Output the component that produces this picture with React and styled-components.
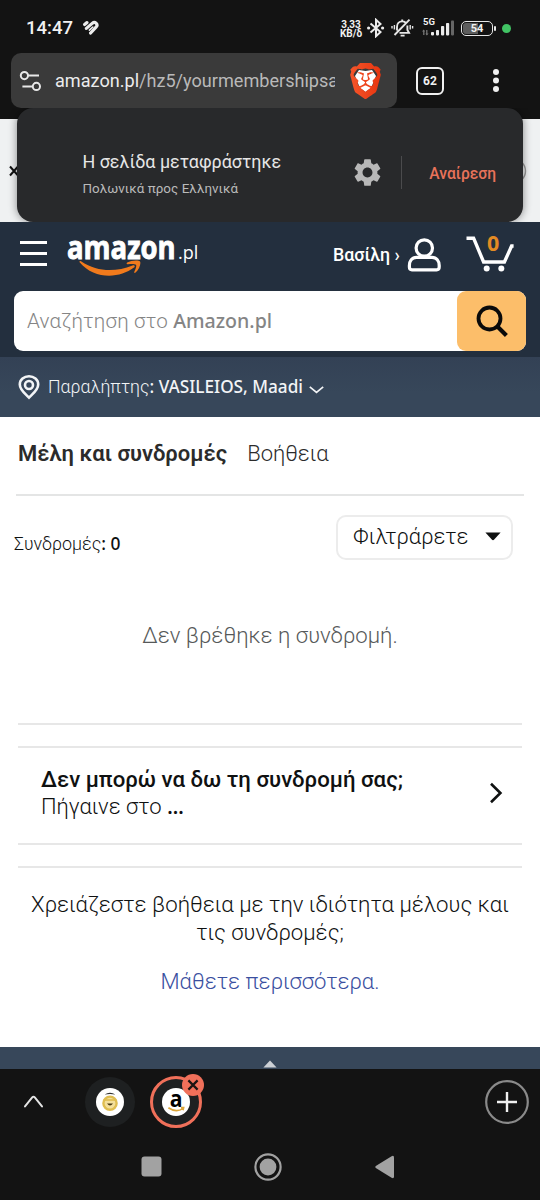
import styled, { createGlobalStyle } from "styled-components";
import { SiBrave } from "react-icons/si";
import { MdSettings } from "react-icons/md";

const Global = createGlobalStyle`
  * { box-sizing: border-box; }
  body { margin: 0; background: #fff; }
  svg { display: block; flex: none; }
  button { border: 0; padding: 0; background: none; font: inherit; color: inherit; }
`

const ember = `"Noto Sans", sans-serif`

const Screen = styled.div`
  width: 540px;
  height: 1200px;
  display: flex;
  flex-direction: column;
  overflow: hidden;
  background: #fff;
  color: #0f1111;
  font-family: Roboto, "Noto Sans", sans-serif;
  white-space: nowrap;
`

/* ---------- system status bar ---------- */
const StatusBar = styled.div`
  height: 53px;
  padding: 3px 29px 0 26px;
  display: flex;
  align-items: center;
  background: #131313;
  color: #f1f1f1;
`
const Clock = styled.span`
  width: 56px;
  font-size: 18.5px;
  font-weight: 500;
`
const StatusIcons = styled.div`
  margin-left: auto;
  display: flex;
  align-items: center;
`
const Speed = styled.div`
  width: 22px;
  margin: 2px 4px 0 0;
  font-size: 10px;
  font-weight: 700;
  line-height: 9.5px;
  text-align: center;
`
const Bluetooth = styled.div`
  margin-right: 4px;
`
const Signal = styled.div`
  position: relative;
  margin-left: 8px;
  span {
    position: absolute;
    left: 1px;
    top: -4px;
    font-size: 9.5px;
    font-weight: 700;
    line-height: 11px;
  }
`
const Battery = styled.div`
  width: 32px;
  height: 15px;
  margin-left: 7px;
  border: 1.6px solid #e6e6e6;
  border-radius: 5px;
  background: linear-gradient(90deg, #5c5c5c 54%, #131313 54%);
  background-clip: content-box;
  padding: 1px;
  font-size: 11px;
  font-weight: 700;
  line-height: 11.5px;
  text-align: center;
`
const BatteryTip = styled.i`
  width: 2px;
  height: 5px;
  margin-left: 1px;
  border-radius: 1px;
  background: #e6e6e6;
`
const Dot = styled.i`
  width: 9px;
  height: 9px;
  margin-left: 6px;
  border-radius: 50%;
  background: #41c464;
`

/* ---------- browser toolbar ---------- */
const Toolbar = styled.div`
  height: 66px;
  padding-left: 11px;
  display: flex;
  align-items: flex-start;
  background: #131313;
`
const UrlBox = styled.div`
  width: 386px;
  height: 55px;
  padding: 0 16px 0 8px;
  display: flex;
  align-items: center;
  border-radius: 10px;
  background: #3a3a3a;
`
const Url = styled.div`
  width: 280px;
  margin: 0 15px 0 13px;
  overflow: hidden;
  font-size: 18.1px;
  color: #b9b9b9;
  b { font-weight: 400; color: #ececec; }
`
const Tabs = styled.button`
  width: 28px;
  height: 28px;
  margin: 14px 0 0 19px;
  border: 2px solid #f0f0f0;
  border-radius: 6px;
  color: #f0f0f0;
  font-size: 12px;
  font-weight: 700;
  line-height: 24px;
`
const MenuButton = styled.button`
  margin: 15px 0 0 48px;
`

/* ---------- translate message over the page ---------- */
const Behind = styled.div`
  position: relative;
  height: 103px;
  padding: 0 8px;
  display: flex;
  align-items: center;
  background: #eff1f2;
`
const Message = styled.div`
  position: absolute;
  left: 17px;
  right: 17px;
  top: -11px;
  height: 114px;
  padding: 15px 27px 0 65px;
  display: flex;
  align-items: center;
  border-radius: 16px;
  background: #28292b;
  box-shadow: 0 0 8px rgba(0, 0, 0, 0.45);
  clip-path: inset(0 -12px 0 -12px);
`
const MessageText = styled.div`
  width: 273px;
  padding: 5px 0 0 0.5px;
  color: #e6e6e6;
  font-size: 17.9px;
  line-height: 24px;
  small {
    display: block;
    margin-top: 3px;
    font-size: 13.4px;
    color: #bababa;
    letter-spacing: 0.05px;
  }
`
const MessageRule = styled.i`
  width: 1px;
  height: 33px;
  margin: 0 27px 0 17px;
  background: #4b4b4d;
`
const Undo = styled.button`
  padding-top: 2px;
  color: #e8735a;
  font-size: 15.6px;
  font-weight: 500;
`

/* ---------- amazon header ---------- */
const Header = styled.header`
  height: 135px;
  background: #232f3e;
`
const HeaderTop = styled.div`
  height: 69px;
  padding-left: 20px;
  display: flex;
  align-items: flex-start;
`
const Burger = styled.div`
  width: 27px;
  height: 25px;
  margin: 19px 20px 0 0;
  display: flex;
  flex-direction: column;
  justify-content: space-between;
  i { height: 3px; background: #fff; }
`
const Logo = styled.div`
  position: relative;
  width: 132px;
  height: 60px;
  display: flex;
  color: #fff;
  svg { position: absolute; left: 12px; top: 38px; }
`
const LogoWord = styled.span`
  width: 111px;
  margin-top: 4px;
  font: 700 32.5px/42px "Open Sans", sans-serif;
  -webkit-text-stroke: 0.9px #fff;
  transform: scaleX(0.845);
  transform-origin: left;
`
const LogoTld = styled.span`
  margin-top: 17px;
  font: 400 18px/26px "Open Sans", sans-serif;
`
const Account = styled.div`
  width: 74px;
  margin: 22px 0 0 134px;
  color: #fff;
  font-size: 17.8px;
  font-weight: 500;
  line-height: 22px;
`
const Cart = styled.div`
  position: relative;
  margin: 12px 0 0 24px;
  span {
    position: absolute;
    left: 21px;
    top: -5px;
    color: #e38b24;
    font: 700 21.5px/28px "Open Sans", sans-serif;
  }
`
const Person = styled.div`
  margin-top: 15px;
`
const Search = styled.div`
  height: 60px;
  margin: 0 14px;
  display: flex;
  border-radius: 9px;
  background: #fff;
`
const SearchInput = styled.div`
  flex: 1;
  padding-left: 13px;
  color: #858585;
  font-size: 20.6px;
  font-weight: 300;
  line-height: 60px;
  letter-spacing: 0.18px;
  white-space: pre;
  b { font: 500 19.6px ${ember}; letter-spacing: 0; }
`
const SearchButton = styled.button`
  width: 69px;
  display: grid;
  place-items: center;
  border-radius: 9px;
  background: #fcbe6a;
`
const Delivery = styled.div`
  height: 60px;
  padding: 0 0 1px 18px;
  display: flex;
  align-items: center;
  background: linear-gradient(#334155, #37475a 60%);
  color: #f2f4f6;
  font-size: 17.8px;
  font-weight: 300;
  b { font: 500 17.2px ${ember}; }
`
const DeliveryText = styled.span`
  margin: 0 6px 0 8px;
`
const DeliveryArrow = styled.span`
  padding-top: 5px;
`

/* ---------- page ---------- */
const Page = styled.main`
  height: 630px;
  display: flex;
  flex-direction: column;
  font-size: 22px;
  font-weight: 300;
`
const PageTabs = styled.nav`
  height: 79px;
  margin: 0 16px;
  padding: 0 0 5px 2px;
  display: flex;
  align-items: center;
  gap: 20px;
  border-bottom: 2px solid #e4e5e5;
  color: #2b2b2b;
  b { font-weight: 600; }
`
const FilterRow = styled.div`
  height: 45px;
  margin: 19px 27px 0 14px;
  display: flex;
  align-items: center;
  justify-content: space-between;
`
const Count = styled.div`
  padding-top: 10px;
  font-size: 17.9px;
  span { font: 500 17.4px ${ember}; }
`
const Filter = styled.button`
  width: 177px;
  height: 45px;
  padding: 0 10px 2px 15px;
  display: flex;
  align-items: center;
  justify-content: space-between;
  border: 2px solid #ececec;
  border-radius: 10px;
`
const Empty = styled.p`
  margin: 61px 0 1px;
  color: #565959;
  font-size: 22.2px;
  line-height: 28px;
  text-align: center;
`
const Rule = styled.hr`
  width: 504px;
  height: 2px;
  margin: ${(p) => p.$top}px auto 0;
  border: 0;
  background: #e7e7e7;
  flex: none;
`
const LinkRow = styled.div`
  height: 95px;
  padding: 0 37px 5px 41px;
  display: flex;
  align-items: center;
  justify-content: space-between;
  line-height: 27.5px;
  b { display: block; font-size: 22.2px; font-weight: 500; }
  em { font: 500 22px/1 ${ember}; letter-spacing: -0.5px; }
`
const Help = styled.div`
  padding: 23px 20px 0;
  font-size: 22.2px;
  line-height: 27.5px;
  text-align: center;
  white-space: normal;
  a { display: block; margin-top: 22px; font-size: 22.1px; color: #3a4f9f; }
`
const BackToTop = styled.div`
  height: 22px;
  padding-top: 13px;
  display: flex;
  justify-content: center;
  background: #37475a;
`

/* ---------- bottom bars ---------- */
const Bottom = styled.div`
  height: 131px;
  background: #131313;
`
const TabStrip = styled.div`
  height: 66px;
  padding: 0 11px 0 23px;
  display: flex;
  align-items: center;
`
const TabChip = styled.div`
  position: relative;
  width: ${(p) => (p.$active ? 52 : 50)}px;
  height: ${(p) => (p.$active ? 52 : 50)}px;
  margin-left: ${(p) => (p.$active ? 15 : 41)}px;
  display: grid;
  place-items: center;
  border-radius: 50%;
  border: ${(p) => (p.$active ? "3px solid #f0705a" : "0")};
  background: #1e2021;
`
const Favicon = styled.div`
  position: relative;
  width: 28px;
  height: 28px;
  display: grid;
  place-items: center;
  border-radius: 50%;
  background: #fff;
  color: #000;
  font: 700 23.5px/22px "Open Sans", sans-serif;
  span { margin-top: -8px; transform: scaleX(0.9); }
  svg { position: absolute; inset: 0; }
`
const CloseBadge = styled.div`
  position: absolute;
  right: -5px;
  top: -5px;
  width: 22px;
  height: 22px;
  display: grid;
  place-items: center;
  border-radius: 50%;
  background: #f0705a;
`
const NewTab = styled.button`
  margin-left: auto;
`
const NavKeys = styled.div`
  height: 65px;
  padding: 0 145px 2px 141px;
  display: flex;
  align-items: center;
  gap: 92px;
  svg:last-child { margin-left: 1px; }
`

const StatusBarRow = () => (
  <StatusBar>
    <Clock>14:47</Clock>
    <svg width="18" height="16" viewBox="0 0 18 16" fill="none" stroke="#ececec" strokeWidth="3.2" strokeLinecap="round">
      <path d="M2.6 4.6L5 2.6" />
      <path d="M4.4 8.4L10.2 3.4C11.6 2.2 12.9 2.1 14 3.1C15.3 4.4 15.2 6 14 7.2L8.6 13" />
      <path d="M7.4 10.2L10.8 7" strokeWidth="1.6" />
    </svg>
    <StatusIcons>
      <Speed>3,33<br />KB/δ</Speed>
      <Bluetooth>
        <svg width="20" height="20" viewBox="0 0 20 20" fill="none" stroke="#ececec" strokeWidth="2">
          <path d="M4.5 5.5L14.5 14L10 18.2V1.8L14.5 6L4.5 14.5" />
          <circle cx="2.6" cy="10" r="1.6" fill="#ececec" stroke="none" />
          <circle cx="16.6" cy="10" r="1.6" fill="#ececec" stroke="none" />
        </svg>
      </Bluetooth>
      <svg width="24" height="20" viewBox="0 0 24 20" fill="none" stroke="#e6e6e6" strokeWidth="1.9">
        <path d="M7 12.5V9C7 5.5 9 3.4 12.2 3.4C13.6 3.4 14.6 3.8 15.5 4.5M17.4 7.4V12L19 14.9H9.5M12.2 3.4V1.6M10.6 17.6H14.6M19.5 1.6L4.5 17" />
        <path d="M4.4 7V11.5M20.2 7V11.5" strokeWidth="1.4" />
        <path d="M2 8V10.6M22.6 8V10.6" strokeWidth="1.4" />
      </svg>
      <Signal>
        <span>5G</span>
        <svg width="32" height="16" viewBox="0 0 32 16" fill="#ececec">
          <path d="M1.8 15V10.5M4.8 10V14.5" stroke="#777" strokeWidth="1.3" />
          <path d="M0 11.6L1.8 9.4L3 11.6ZM3.4 13.6H6.6L4.8 15.6Z" fill="#777" />
          <rect x="9" y="12" width="3" height="3.4" rx=".8" />
          <rect x="14" y="10" width="3" height="5.4" rx=".8" />
          <rect x="19" y="6" width="3.2" height="9.4" rx=".8" />
          <rect x="24" y="3" width="3.2" height="12.4" rx=".8" />
          <rect x="29" y="0.4" width="3" height="15" rx=".8" fill="#666" />
        </svg>
      </Signal>
      <Battery>54</Battery>
      <BatteryTip />
      <Dot />
    </StatusIcons>
  </StatusBar>
)

const BrowserBar = () => (
  <Toolbar>
    <UrlBox>
      <svg width="23" height="22" viewBox="0 0 23 22" fill="none" stroke="#e8e8e8" strokeWidth="2">
        <circle cx="5.4" cy="5.6" r="3.6" />
        <circle cx="17.4" cy="16.4" r="3.6" />
        <path d="M9 5.6H20M3.4 16.4H13.8" />
      </svg>
      <Url><b>amazon.pl</b>/hz5/yourmembershipsa</Url>
      <svg width="31" height="36" viewBox="0 0 31 36">
        <defs>
          <linearGradient id="lion" x1="0" x2="1">
            <stop offset="0" stopColor="#f4552a" />
            <stop offset="1" stopColor="#e8350f" />
          </linearGradient>
        </defs>
        <path d="M9 7L15.5 8L22 7L26 13L21 25L15.5 29L10 25L5 13Z" fill="#fff" />
        <SiBrave x="-2.5" y="0" size={36} fill="url(#lion)" />
      </svg>
    </UrlBox>
    <Tabs>62</Tabs>
    <MenuButton>
      <svg width="8" height="26" viewBox="0 0 8 26" fill="#f0f0f0">
        <circle cx="4" cy="4" r="3" />
        <circle cx="4" cy="12.5" r="3" />
        <circle cx="4" cy="21" r="3" />
      </svg>
    </MenuButton>
  </Toolbar>
)

const TranslateMessage = () => (
  <Behind>
    <svg width="12" height="12" viewBox="0 0 12 12" fill="none" stroke="#111" strokeWidth="2">
      <path d="M2 1.5L10 10.5M10 1.5L2 10.5" />
    </svg>
    <svg width="512" height="26" viewBox="0 0 512 26" fill="none" stroke="#999" strokeWidth="1.4">
      <circle cx="493.5" cy="13" r="12" />
    </svg>
    <Message>
      <MessageText>
        Η σελίδα μεταφράστηκε
        <small>Πολωνικά προς Ελληνικά</small>
      </MessageText>
      <MdSettings size={33} color="#b8b8b8" />
      <MessageRule />
      <Undo>Αναίρεση</Undo>
    </Message>
  </Behind>
)

const AmazonHeader = () => (
  <>
    <Header>
      <HeaderTop>
        <Burger><i /><i /><i /></Burger>
        <Logo>
          <LogoWord>amazon</LogoWord>
          <LogoTld>.pl</LogoTld>
          <svg width="64" height="18" viewBox="0 0 64 18" fill="#f07a1c">
            <path d="M0.6 2.2C0 1.2 1 .6 2 1.2C19 12.5 37 11.8 53.5 5.4C55.5 4.7 56.6 6.4 55 7.6C40 19 15 19.5 0.6 2.2Z" />
            <path d="M48.2 2.6C52 .2 59.5 -.2 61 1.4C62.4 3.4 60 9.6 56.6 12.6C55.6 13.4 54.8 12.8 55.4 11.6C56.6 8.8 57.8 5.8 57 4.8C56 3.8 52.4 3.8 49 4.2C47.4 4.2 47.2 3.2 48.2 2.6Z" />
          </svg>
        </Logo>
        <Account>Βασίλη ›</Account>
        <Person>
          <svg width="35" height="36" viewBox="0 0 35 36" fill="none" stroke="#fff" strokeWidth="3.2">
            <circle cx="17.3" cy="11" r="8.2" />
            <path d="M9.5 20.3H25C29.5 20.3 32.2 24 32.2 28.5V30C32.2 31.8 31.3 32.8 29.6 32.8H5C3.3 32.8 2.4 31.8 2.4 30V28.5C2.4 24 5 20.3 9.5 20.3Z" />
          </svg>
        </Person>
        <Cart>
          <svg width="48" height="40" viewBox="0 0 48 40" fill="none" stroke="#fff" strokeWidth="3.4">
            <path d="M0.5 4.2H7.6L17.6 28H38.4L45.6 12H47.6" />
            <circle cx="20.7" cy="34.4" r="3" fill="#fff" stroke="none" />
            <circle cx="35.3" cy="34.4" r="3" fill="#fff" stroke="none" />
          </svg>
          <span>0</span>
        </Cart>
      </HeaderTop>
      <Search>
        <SearchInput>Αναζήτηση στο <b>Amazon.pl</b></SearchInput>
        <SearchButton>
          <svg width="34" height="34" viewBox="0 0 34 34" fill="none" stroke="#0a0a0a" strokeWidth="3.8">
            <circle cx="14.5" cy="14.5" r="11" />
            <path d="M22.4 22.4L31.4 31.4" strokeWidth="4.2" />
          </svg>
        </SearchButton>
      </Search>
    </Header>
    <Delivery>
      <svg width="22" height="26" viewBox="0 0 22 26" fill="none" stroke="#f2f4f6" strokeWidth="2.6">
        <path d="M11 23.6C7 19.4 1.8 15.8 1.8 10.4C1.8 5.6 6 2.2 11 2.2C16 2.2 20.2 5.6 20.2 10.4C20.2 15.8 15 19.4 11 23.6Z" />
        <circle cx="11" cy="11" r="4" />
      </svg>
      <DeliveryText>Παραλήπτης<b>: VASILEIOS, Maadi</b></DeliveryText>
      <DeliveryArrow>
        <svg width="15" height="9" viewBox="0 0 15 9" fill="none" stroke="#f2f4f6" strokeWidth="1.7">
          <path d="M0.8 1.8L7.5 7.4L14.2 1.8" />
        </svg>
      </DeliveryArrow>
    </Delivery>
  </>
)

export default function App() {
  return (
    <Screen>
      <Global />
      <StatusBarRow />
      <BrowserBar />
      <TranslateMessage />
      <AmazonHeader />
      <Page>
        <PageTabs>
          <b>Μέλη και συνδρομές</b>
          <span>Βοήθεια</span>
        </PageTabs>
        <FilterRow>
          <Count>Συνδρομές<span>: 0</span></Count>
          <Filter>
            Φιλτράρετε
            <svg width="16" height="9" viewBox="0 0 16 9" fill="#0f1111">
              <path d="M0.4 0.6H15.6L9.2 7.6Q8 8.8 6.8 7.6Z" />
            </svg>
          </Filter>
        </FilterRow>
        <Empty>Δεν βρέθηκε η συνδρομή.</Empty>
        <Rule $top={73} />
        <Rule $top={21} />
        <LinkRow>
          <div>
            <b>Δεν μπορώ να δω τη συνδρομή σας;</b>
            Πήγαινε στο <em>...</em>
          </div>
          <svg width="14" height="22" viewBox="0 0 14 22" fill="none" stroke="#0f1111" strokeWidth="2.6">
            <path d="M2 1.8L11.4 11L2 20.2" />
          </svg>
        </LinkRow>
        <Rule $top={0} />
        <Rule $top={21} />
        <Help>
          Χρειάζεστε βοήθεια με την ιδιότητα μέλους και τις συνδρομές;
          <a>Μάθετε περισσότερα.</a>
        </Help>
      </Page>
      <BackToTop>
        <svg width="14" height="8" viewBox="0 0 14 8" fill="#ccd0d5">
          <path d="M7 0.4L13.6 7.6H0.4Z" />
        </svg>
      </BackToTop>
      <Bottom>
        <TabStrip>
          <svg width="21" height="14" viewBox="0 0 21 14" fill="none" stroke="#e4e4e4" strokeWidth="2" strokeLinecap="round">
            <path d="M2 11.4L9.2 2.4Q10.5 1 11.8 2.4L19 11.4" />
          </svg>
          <TabChip>
            <Favicon>
              <svg width="28" height="28" viewBox="0 0 28 28">
                <path d="M8.6 6.6Q14 2.8 19.4 6.6Q14 5.6 8.6 6.6Z" fill="#333" />
                <circle cx="14" cy="15.2" r="6.6" fill="#f3df9b" stroke="#dfbd50" strokeWidth="2.4" />
                <path d="M7.5 12H20.5" stroke="#dfbd50" strokeWidth="1.6" />
                <path d="M11 15.6H17Q14 19.6 11 15.6Z" fill="#4a3a12" />
              </svg>
            </Favicon>
          </TabChip>
          <TabChip $active>
            <Favicon>
              <span>a</span>
              <svg width="28" height="28" viewBox="0 0 28 28" fill="none" stroke="#dba53a" strokeWidth="1.7">
                <path d="M6.4 19.8Q14 25 21 20.6M19 19.6L21.6 19.6L21 22.2" />
              </svg>
            </Favicon>
            <CloseBadge>
              <svg width="12" height="12" viewBox="0 0 12 12" stroke="#1c1412" strokeWidth="2.2">
                <path d="M1.4 1.4L10.6 10.6M10.6 1.4L1.4 10.6" />
              </svg>
            </CloseBadge>
          </TabChip>
          <NewTab>
            <svg width="44" height="44" viewBox="0 0 44 44" fill="none">
              <circle cx="22" cy="22" r="20.8" stroke="#8a8a8a" strokeWidth="2.2" />
              <path d="M22 12V32M12 22H32" stroke="#f0f0f0" strokeWidth="2.4" />
            </svg>
          </NewTab>
        </TabStrip>
        <NavKeys>
          <svg width="21" height="21" viewBox="0 0 21 21" fill="#a2a2a2">
            <rect x="0.5" y="0.5" width="20" height="20" rx="3" />
          </svg>
          <svg width="28" height="28" viewBox="0 0 28 28" fill="none">
            <circle cx="14" cy="14" r="12.6" stroke="#a2a2a2" strokeWidth="2.2" />
            <circle cx="14" cy="14" r="8.4" fill="#a2a2a2" />
          </svg>
          <svg width="20" height="24" viewBox="0 0 20 24" fill="#a2a2a2">
            <path d="M0.8 11Q-0.2 12 0.8 13L16.6 22.8Q19 24 19 21.6V2.4Q19 0 16.6 1.2Z" />
          </svg>
        </NavKeys>
      </Bottom>
    </Screen>
  )
}
